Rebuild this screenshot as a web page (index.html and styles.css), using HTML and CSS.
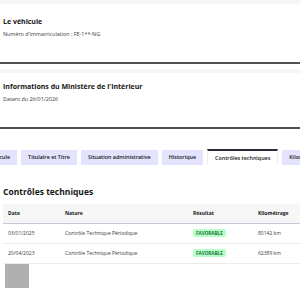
FILE: index.html
```html
<!DOCTYPE html>
<html lang="fr">
<head>
<meta charset="utf-8">
<link rel="stylesheet" href="styles.css">
</head>
<body>
<section class="card card-first">
  <h3 class="card-title">Le véhicule</h3>
  <p class="card-desc">Numéro d'immatriculation : FE-1**-NG</p>
</section>
<section class="card card-second">
  <h3 class="card-title">Informations du Ministère de l'Intérieur</h3>
  <p class="card-desc">Datant du 26/01/2026</p>
</section>
<nav class="tabs">
  <ul class="tab-list">
    <li class="tab">Véhicule</li>
    <li class="tab">Titulaire et Titre</li>
    <li class="tab">Situation administrative</li>
    <li class="tab">Historique</li>
    <li class="tab tab-active">Contrôles techniques</li>
    <li class="tab">Kilométrage</li>
  </ul>
</nav>
<h2 class="section-title">Contrôles techniques</h2>
<div class="table-wrap">
  <table class="table">
    <thead>
      <tr>
        <th class="col-date">Date</th>
        <th class="col-nature">Nature</th>
        <th class="col-result">Résultat</th>
        <th class="col-km">Kilométrage</th>
      </tr>
    </thead>
    <tbody>
      <tr>
        <td>03/01/2025</td>
        <td>Contrôle Technique Périodique</td>
        <td><span class="badge">Favorable</span></td>
        <td>80142 km</td>
      </tr>
      <tr>
        <td>20/04/2023</td>
        <td>Contrôle Technique Périodique</td>
        <td><span class="badge">Favorable</span></td>
        <td>62389 km</td>
      </tr>
    </tbody>
  </table>
</div>
<div class="square"></div>
</body>
</html>
```
FILE: styles.css
```css
* { box-sizing: border-box; }
html, body { margin: 0; padding: 0; background: #fff; }
body {
  width: 300px;
  height: 294px;
  overflow: hidden;
  font-family: "Open Sans", "Noto Sans", sans-serif;
  color: #161616;
}
.card {
  border-top: 4px solid #f5f5f5;
  border-bottom: 2px solid #505050;
  padding: 0 3px;
}
.card-first { height: 64px; padding-top: 13px; }
.card-second { height: 60px; margin-top: 5px; padding-top: 9px; }
.card-title {
  margin: 0;
  font-size: 7px;
  line-height: 10px;
  font-weight: 700;
  color: #161616;
}
.card-desc {
  margin: 3px 0 0;
  font-size: 5.4px;
  line-height: 8px;
  color: #3a3a3a;
}
.tabs {
  margin-top: 20px;
  overflow: hidden;
  height: 16px;
}
.tab-list {
  list-style: none;
  margin: 0 0 0 -19px;
  padding: 0;
  display: flex;
  gap: 4px;
  white-space: nowrap;
}
.tab {
  flex: none;
  height: 15px;
  padding: 0 7px;
  margin-top: 1px;
  background: #e3e3fd;
  font-size: 5.4px;
  font-weight: 600;
  line-height: 15px;
  color: #161616;
}
.tab-active {
  background: #fff;
  border-top: 2px solid #2a2a3a;
  margin-top: 0;
  height: 16px;
  line-height: 14px;
  border-left: 1px solid #eee;
  border-right: 1px solid #eee;
}
.section-title {
  margin: 21px 3px 0;
  font-size: 8.5px;
  line-height: 12px;
  font-weight: 700;
  color: #161616;
}
.table-wrap {
  margin: 6px 0 0 3px;
  overflow: hidden;
}
.table {
  border-collapse: collapse;
  width: 310px;
  table-layout: fixed;
  font-size: 5px;
  color: #3a3a3a;
}
.table th {
  background: #f6f6f6;
  font-weight: 700;
  color: #161616;
  text-align: left;
  height: 19px;
  padding: 0 5px;
  border-bottom: 1px solid #c8c8d8;
}
.table td {
  height: 20px;
  padding: 0 5px;
  border-bottom: 1px solid #ececec;
}
.col-date { width: 57px; }
.col-nature { width: 128px; }
.col-result { width: 65px; }
.col-km { width: 60px; }
.badge {
  display: inline-block;
  background: #b8fec9;
  color: #18753c;
  font-weight: 700;
  text-transform: uppercase;
  font-size: 4.6px;
  line-height: 8px;
  padding: 0 3px;
  border-radius: 2px;
}
.square {
  margin: 0 0 0 5px;
  width: 24px;
  height: 24px;
  background: #b0b0b0;
}
```
